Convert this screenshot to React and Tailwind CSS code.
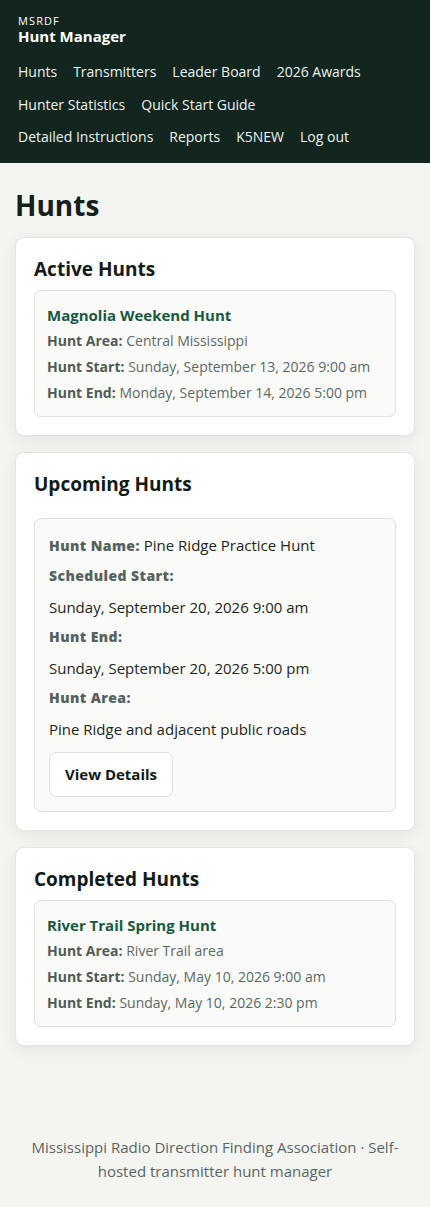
import React from "react";

const font = { fontFamily: "'Open Sans', 'Noto Sans', 'Liberation Sans', sans-serif" };

function Row({ label, value }) {
  return (
    <div className="text-[14px] leading-[26px] text-[#5d6864]">
      <span className="font-bold text-[#505b56]">{label}</span> {value}
    </div>
  );
}

function HuntBox({ title, rows }) {
  return (
    <div className="rounded-[7px] border border-[#dfe3de] bg-[#fafbf9] px-[12px] pt-[11px] pb-[10px]">
      <div className="text-[15px] font-bold leading-[26px] text-[#17593f]">{title}</div>
      {rows.map((r) => (
        <Row key={r[0]} label={r[0]} value={r[1]} />
      ))}
    </div>
  );
}

function Card({ title, children, headMb = "mb-[9px]" }) {
  return (
    <section className="rounded-[9px] border border-[#e3e6e1] bg-white px-[18px] pt-[19px] pb-[18px] shadow-[0_4px_14px_rgba(20,40,30,0.08)]">
      <h2 className={`text-[19px] font-bold leading-[24px] text-[#111a16] ${headMb}`}>{title}</h2>
      {children}
    </section>
  );
}

export default function App() {
  const nav = [
    "Hunts",
    "Transmitters",
    "Leader Board",
    "2026 Awards",
    "Hunter Statistics",
    "Quick Start Guide",
    "Detailed Instructions",
    "Reports",
    "K5NEW",
    "Log out",
  ];
  return (
    <div style={font} className="min-h-[1207px] bg-[#f4f5f1] flex flex-col">
      <header className="bg-[#12261f] pl-[18px] pr-[30px] pt-[14px] pb-[9px] text-white">
        <div className="text-[11px] leading-[13px] tracking-[0.1em]">MSRDF</div>
        <div className="text-[15px] font-bold leading-[18px]">Hunt Manager</div>
        <nav className="mt-[11px] flex flex-wrap gap-x-[16px] text-[14px] leading-[32.5px] text-[#eef2ef]">
          {nav.map((n) => (
            <a key={n} href="#" className="whitespace-nowrap">
              {n}
            </a>
          ))}
        </nav>
      </header>

      <main className="px-[15px] pt-[24px]">
        <h1 className="text-[28px] font-bold leading-[36px] text-[#14201b] mb-[14px]">Hunts</h1>

        <div className="flex flex-col gap-[16px]">
          <Card title="Active Hunts">
            <HuntBox
              title="Magnolia Weekend Hunt"
              rows={[
                ["Hunt Area:", "Central Mississippi"],
                ["Hunt Start:", "Sunday, September 13, 2026 9:00 am"],
                ["Hunt End:", "Monday, September 14, 2026 5:00 pm"],
              ]}
            />
          </Card>

          <Card title="Upcoming Hunts" headMb="mb-[22px]">
            <div className="rounded-[7px] border border-[#dfe3de] bg-[#fafbf9] px-[14px] pt-[15px] pb-[14px]">
              <div className="flex flex-col gap-[8.5px] text-[15px] leading-[22px] text-[#1c2520]">
                <div>
                  <span className="font-extrabold tracking-[0.03em] text-[14px] text-[#56625d]">Hunt Name:</span>{" "}
                  Pine Ridge Practice Hunt
                </div>
                <div className="font-extrabold tracking-[0.03em] text-[14px] text-[#56625d]">Scheduled Start:</div>
                <div>Sunday, September 20, 2026 9:00 am</div>
                <div className="font-extrabold tracking-[0.03em] text-[14px] text-[#56625d]">Hunt End:</div>
                <div>Sunday, September 20, 2026 5:00 pm</div>
                <div className="font-extrabold tracking-[0.03em] text-[14px] text-[#56625d]">Hunt Area:</div>
                <div>Pine Ridge and adjacent public roads</div>
              </div>
              <button className="mt-[12px] h-[45px] w-[124px] rounded-[7px] border border-[#dde1dc] bg-white text-[15px] font-bold text-[#111a16]">
                View Details
              </button>
            </div>
          </Card>

          <Card title="Completed Hunts">
            <HuntBox
              title="River Trail Spring Hunt"
              rows={[
                ["Hunt Area:", "River Trail area"],
                ["Hunt Start:", "Sunday, May 10, 2026 9:00 am"],
                ["Hunt End:", "Sunday, May 10, 2026 2:30 pm"],
              ]}
            />
          </Card>
        </div>
      </main>

      <footer className="px-[24px] pt-[89px] pb-[24px] text-center text-[15px] leading-[24px] text-[#5b6662]">
        Mississippi Radio Direction Finding Association · Self-hosted transmitter hunt manager
      </footer>
    </div>
  );
}
